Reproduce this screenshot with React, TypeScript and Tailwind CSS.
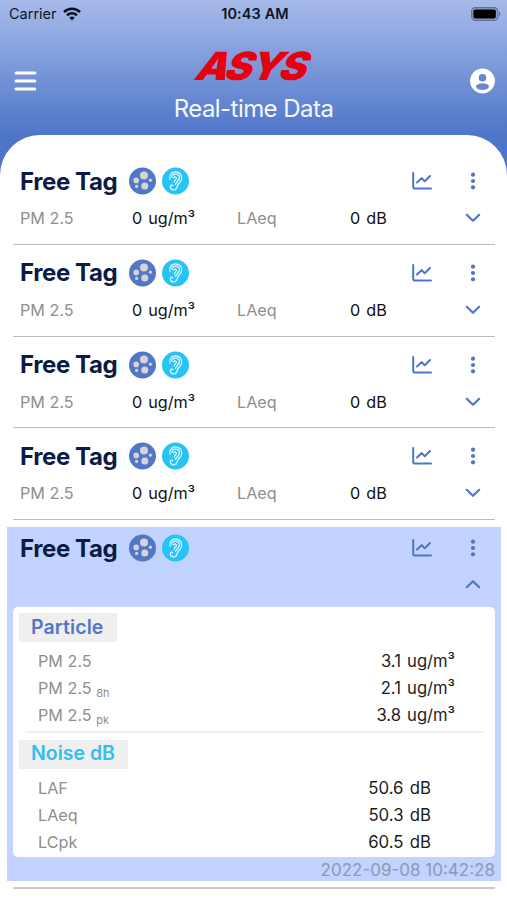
const tags = [
  { id: 1, name: "Free Tag", pm: "0 ug/m³", laeq: "0 dB" },
  { id: 2, name: "Free Tag", pm: "0 ug/m³", laeq: "0 dB" },
  { id: 3, name: "Free Tag", pm: "0 ug/m³", laeq: "0 dB" },
  { id: 4, name: "Free Tag", pm: "0 ug/m³", laeq: "0 dB" },
]

const particleRows = [
  { label: "PM 2.5", sub: "", value: "3.1 ug/m³" },
  { label: "PM 2.5", sub: "8h", value: "2.1 ug/m³" },
  { label: "PM 2.5", sub: "pk", value: "3.8 ug/m³" },
]

const noiseRows = [
  { label: "LAF", value: "50.6 dB" },
  { label: "LAeq", value: "50.3 dB" },
  { label: "LCpk", value: "60.5 dB" },
]

function WifiIcon() {
  return (
    <svg width="18" height="14" viewBox="0 0 18 14" fill="none" stroke="#0b0f1a" strokeWidth="2.5">
      <path d="M1 5.1a11.4 11.4 0 0 1 16 0" />
      <path d="M4 8.3a7.1 7.1 0 0 1 10 0" />
      <path d="M9 13.6 6.3 10.8a3.9 3.9 0 0 1 5.4 0z" fill="#0b0f1a" stroke="none" />
    </svg>
  )
}

function BatteryIcon() {
  return (
    <svg width="30" height="14" viewBox="0 0 30 14">
      <rect x="0.6" y="0.6" width="26.3" height="12.8" rx="3.6" fill="#8b9cc6" stroke="#62719a" strokeWidth="1.1" />
      <rect x="2.4" y="2.4" width="22.4" height="9.2" rx="1.8" fill="#000" />
      <path d="M28 4.8c1.6.5 1.6 3.9 0 4.4z" fill="#62719a" />
    </svg>
  )
}

function ParticleIcon() {
  return (
    <svg width="27" height="28" viewBox="0 0 27 28">
      <circle cx="13.5" cy="14" r="13.5" fill="#5377c7" />
      <g fill="#d5d5d5">
        <circle cx="15" cy="8.6" r="4" />
        <circle cx="7.2" cy="13.4" r="2.8" />
        <circle cx="15.8" cy="19" r="3.5" />
        <circle cx="21.4" cy="13.2" r="1.6" />
        <circle cx="7.6" cy="19.4" r="1.6" />
      </g>
    </svg>
  )
}

function EarIcon() {
  return (
    <svg width="27" height="28" viewBox="0 0 27 28" fill="none" strokeLinecap="round" strokeLinejoin="round">
      <circle cx="13.5" cy="14" r="13.5" fill="#27c3f5" />
      <g stroke="#d8f5ff" strokeWidth="1.3">
        <path d="M8 12.3C6.9 8.3 9.5 5 13.6 5c3.8 0 6.3 2.6 6.1 6.2-.2 4.3-3.7 5-4.3 7.6-.5 2.6-1.9 4.2-4.1 4-2-.1-3.2-1.6-2.9-3.5.2-1.4 1.9-1.7 2.4-.4" />
        <path d="M9.8 10.4c.2-2 1.7-3.2 3.7-3.2 2.4 0 4.1 1.6 3.9 3.9-.2 2.7-2.9 3.8-4 6.3" />
        <path d="M11.6 10.9c1.2-1.5 3-.9 2.9.6-.1 1.3-2.7 1.8-2.2 3.6" />
      </g>
    </svg>
  )
}

function ChartIcon() {
  return (
    <svg width="20" height="18" viewBox="0 0 20 18" fill="none" stroke="#4f75c8" strokeWidth="2" strokeLinecap="round" strokeLinejoin="round">
      <path d="M1.2 1v13.7a1.8 1.8 0 0 0 1.8 1.8h16" />
      <path d="m5 10.6 4.8-4.5 2.9 3.2L18 4" />
    </svg>
  )
}

function DotsIcon() {
  return (
    <svg width="6" height="18" viewBox="0 0 6 18" fill="#4f75c8">
      <circle cx="3" cy="2.7" r="2.1" />
      <circle cx="3" cy="9" r="2.1" />
      <circle cx="3" cy="15.3" r="2.1" />
    </svg>
  )
}

function Chevron({ up }: { up?: boolean }) {
  return (
    <svg width="16" height="10" viewBox="0 0 16 10" fill="none" stroke="#4f75c8" strokeWidth="2.2" strokeLinecap="round" strokeLinejoin="round">
      <path d={up ? "m1.8 8.2 6.2-6 6.2 6" : "m1.8 1.8 6.2 6 6.2-6"} />
    </svg>
  )
}

function TagTitle({ name }: { name: string }) {
  return (
    <div className="flex h-[28px] items-center">
      <span className="w-[109px] whitespace-nowrap pt-[1px] text-[24px] font-bold tracking-[-0.4px] text-[#0b1b45]">{name}</span>
      <ParticleIcon />
      <span className="w-[6px]" />
      <EarIcon />
      <div className="ml-auto flex items-center gap-[38px]">
        <ChartIcon />
        <DotsIcon />
      </div>
    </div>
  )
}

export default function App() {
  return (
    <div className="flex h-[900px] w-[507px] flex-col overflow-hidden bg-[#4f75c8] font-['Inter',sans-serif]">
      <header className="h-[135px] shrink-0 bg-gradient-to-b from-[#a7bbea] to-[#4f75c8]">
        <div className="grid h-[27px] grid-cols-3 items-center pl-[9px] pr-[6px] text-[14.5px] text-[#10141f]">
          <div className="flex items-center gap-[6px]">
            <span>Carrier</span>
            <WifiIcon />
          </div>
          <span className="text-center font-semibold tracking-[0.1px]">10:43 AM</span>
          <div className="flex justify-end">
            <BatteryIcon />
          </div>
        </div>
        <div className="flex h-[108px] items-center justify-between pl-[14px] pr-[12px]">
          <svg width="23" height="20" viewBox="0 0 23 20" stroke="#fff" strokeWidth="3.2" strokeLinecap="round">
            <path d="M2.2 2h18.6M2.2 10h18.6M2.2 18h18.6" />
          </svg>
          <div className="flex h-full flex-col items-center pt-[23px]">
            <div className="flex h-[31px] w-[120px] items-center justify-center">
              <span className="-skew-x-[22deg] scale-x-[1.06] whitespace-nowrap font-['Inter',sans-serif] text-[39px] font-black leading-[44px] tracking-[-2.5px] text-[#e60012]">ASYS</span>
            </div>
            <h1 className="mt-[10px] text-[24px] leading-[36px] tracking-[-0.55px] text-[#f4f7ff]">Real-time Data</h1>
          </div>
          <svg width="25" height="26" viewBox="0 0 25 26">
            <circle cx="12.5" cy="13" r="12.4" fill="#fff" />
            <circle cx="12.5" cy="9.8" r="3.8" fill="#6788d0" />
            <ellipse cx="12.5" cy="18.6" rx="6.5" ry="3.3" fill="#6788d0" />
          </svg>
        </div>
      </header>

      <main className="flex-1 rounded-t-[40px] bg-white pt-[18.3px]">
        {tags.map((tag) => (
          <section key={tag.id} className="ml-[13px] mr-[12px] flex h-[91.7px] flex-col border-b-[1.5px] border-[#bcbcbc] pl-[7px] pr-[19px] pt-[14px]">
            <TagTitle name={tag.name} />
            <div className="mt-[11px] flex h-6 items-center text-[16.2px] text-[#111]">
              <span className="w-[112px] text-[#8e8e8e]">PM 2.5</span>
              <span className="w-[105px] [word-spacing:1.5px]">{tag.pm}</span>
              <span className="w-[113px] text-[#8e8e8e]">LAeq</span>
              <span className="[word-spacing:1.5px]">{tag.laeq}</span>
              <div className="-mr-[5px] ml-auto">
                <Chevron />
              </div>
            </div>
          </section>
        ))}

        <section className="ml-[7px] mr-[6px] mt-[6.5px] h-[354px] bg-[#c1d3fe] px-[6px] pt-[7.5px]">
          <div className="pl-[7px] pr-[19px]">
            <TagTitle name="Free Tag" />
            <div className="-mr-[5px] mt-[17px] flex justify-end">
              <Chevron up />
            </div>
          </div>
          <div className="mt-[17.5px] h-[250px] rounded-[5px] bg-white pl-[6px] pt-[6px]">
            <h2 className="flex h-[29px] w-[98px] items-center bg-[#efefef] pl-[12px] pt-[1px] text-[19.5px] font-semibold tracking-[0.1px] text-[#5377c7]">Particle</h2>
            <div className="pr-[40px] pt-[6px]">
              {particleRows.map((row) => (
                <div key={row.value} className="flex h-[27px] items-center justify-between pl-[19px] text-[16.2px] text-[#1c1c1c]">
                  <span className="text-[#8e8e8e]">
                    {row.label} {row.sub && <span className="relative top-[3px] text-[11px]">{row.sub}</span>}
                  </span>
                  <span className="pt-[1px] text-[16.6px] [word-spacing:1.5px]">{row.value}</span>
                </div>
              ))}
            </div>
            <div className="ml-[6px] mr-[12px] mt-[2px] h-[2px] bg-[#efefef]" />
            <h2 className="mt-[7px] flex h-[29px] w-[109px] items-center bg-[#efefef] pl-[12px] text-[19.5px] font-semibold text-[#35bdf0]">Noise dB</h2>
            <div className="pr-[64px] pt-[6px]">
              {noiseRows.map((row) => (
                <div key={row.label} className="flex h-[27px] items-center justify-between pl-[19px] text-[16.2px] text-[#1c1c1c]">
                  <span className="text-[#8e8e8e]">{row.label}</span>
                  <span className="pt-[1px] text-[16.8px] [word-spacing:1.5px]">{row.value}</span>
                </div>
              ))}
            </div>
          </div>
          <p className="pt-px text-right text-[17px] leading-[25px] text-[#8d99b5]">2022-09-08 10:42:28</p>
        </section>
        <div className="ml-[13px] mr-[12px] mt-[6px] h-[2px] bg-[#cacbc9]" />
      </main>
    </div>
  )
}
